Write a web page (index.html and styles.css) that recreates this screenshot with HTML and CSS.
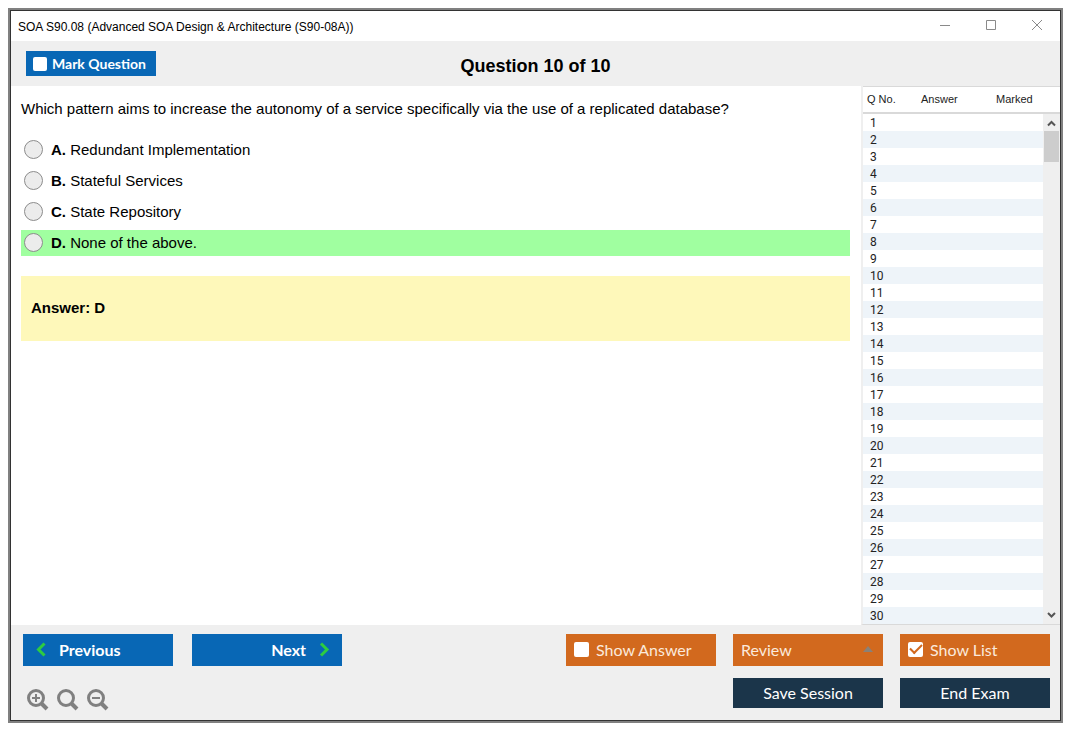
FILE: index.html
```html
<!DOCTYPE html>
<html lang="en">
  <head>
    <meta charset="UTF-8" />
    <meta name="viewport" content="width=device-width, initial-scale=1.0" />
    <title>SOA S90.08</title>
    <link rel="stylesheet" href="styles.css">
  </head>
  <body>
    <div class="window">
      <div class="title-bar">
        <span class="title">SOA S90.08 (Advanced SOA Design &amp; Architecture (S90-08A))</span>
        <div class="window-controls">
          <button type="button" aria-label="Minimize">
            <svg width="12" height="12" viewBox="0 0 12 12"><path d="M1 5.500h10" /></svg>
          </button>
          <button type="button" aria-label="Maximize">
            <svg width="12" height="12" viewBox="0 0 12 12"><path d="M1.500 .5h9v9h-9z" /></svg>
          </button>
          <button type="button" aria-label="Close">
            <svg width="12" height="12" viewBox="0 0 12 12"><path d="M1 0l10 10M11 0L1 10" /></svg>
          </button>
        </div>
      </div>

      <header class="header">
        <label class="mark">
          <input type="checkbox" class="check check-small" id="markQuestion" />
          Mark Question
        </label>
        <h1>Question 10 of 10</h1>
      </header>

      <main class="main">
        <section class="question">
          <p class="question-text">
            Which pattern aims to increase the autonomy of a service
            specifically via the use of a replicated database?
          </p>
          <div class="options">
            <label class="option">
              <input type="radio" name="answer" value="A" />
              <span><b>A.</b> Redundant Implementation</span>
            </label>
            <label class="option">
              <input type="radio" name="answer" value="B" />
              <span><b>B.</b> Stateful Services</span>
            </label>
            <label class="option">
              <input type="radio" name="answer" value="C" />
              <span><b>C.</b> State Repository</span>
            </label>
            <label class="option correct">
              <input type="radio" name="answer" value="D" />
              <span><b>D.</b> None of the above.</span>
            </label>
          </div>
          <div class="answer-box" id="answerBox">Answer: D</div>
        </section>

        <aside class="list" id="questionList">
          <table class="list-table">
            <thead>
              <tr>
                <th class="col-no">Q No.</th>
                <th class="col-answer">Answer</th>
                <th>Marked</th>
              </tr>
            </thead>
            <tbody id="listRows"></tbody>
          </table>
          <div class="scrollbar">
            <svg width="9" height="17" viewBox="0 0 9 17"><path d="M1 11.500L4.500 8L8 11.500" /></svg>
            <div class="thumb"></div>
            <svg width="9" height="17" viewBox="0 0 9 17"><path d="M1 6L4.500 9.500L8 6" /></svg>
          </div>
        </aside>
      </main>

      <footer class="footer">
        <div class="footer-row">
          <button type="button" class="btn btn-blue">
            <svg width="12" height="16" viewBox="0 0 12 16"><path d="M9.500 2.500L3.500 8.500l6 6" /></svg>
            Previous
          </button>
          <button type="button" class="btn btn-blue btn-next">
            Next
            <svg width="12" height="16" viewBox="0 0 12 16"><path d="M3 2.500l6 6l-6 6" /></svg>
          </button>
          <div class="right">
            <label class="btn btn-orange">
              <input type="checkbox" class="check" id="showAnswer" />
              Show Answer
            </label>
            <div class="btn btn-orange">
              <select class="review" aria-label="Review">
                <option>Review</option>
              </select>
              <svg class="arrow" width="12" height="6" viewBox="0 0 12 6"><path d="M0 6L5 0l5 6z" /></svg>
            </div>
            <label class="btn btn-orange">
              <input type="checkbox" class="check" id="showList" checked />
              Show List
            </label>
          </div>
        </div>

        <div class="footer-row">
          <div class="zoom">
            <button type="button" aria-label="Zoom in">
              <svg width="22" height="22" viewBox="0 0 22 22">
                <circle cx="9" cy="9" r="7.500" />
                <path d="M14.500 14.500L20 20" class="handle" />
                <path d="M5 9h8M9 5v8" class="sign" />
              </svg>
            </button>
            <button type="button" aria-label="Reset zoom">
              <svg width="22" height="22" viewBox="0 0 22 22">
                <circle cx="9" cy="9" r="7.500" />
                <path d="M14.500 14.500L20 20" class="handle" />
              </svg>
            </button>
            <button type="button" aria-label="Zoom out">
              <svg width="22" height="22" viewBox="0 0 22 22">
                <circle cx="9" cy="9" r="7.500" />
                <path d="M14.500 14.500L20 20" class="handle" />
                <path d="M5 9h8" class="sign" />
              </svg>
            </button>
          </div>
          <div class="right">
            <button type="button" class="btn btn-navy">Save Session</button>
            <button type="button" class="btn btn-navy">End Exam</button>
          </div>
        </div>
      </footer>
    </div>

    <script>
      const rows = document.getElementById("listRows");

      for (let i = 1; i <= 30; i++) {
        const row = document.createElement("tr");
        row.innerHTML = `<td>${i}</td><td></td><td></td>`;
        rows.appendChild(row);
      }

      // Toggle the question list
      document.getElementById("showList").addEventListener("change", (e) => {
        document.getElementById("questionList").hidden = !e.target.checked;
      });
    </script>
  </body>
</html>
```
FILE: styles.css
```css
* {
  box-sizing: border-box;
}

body {
  margin: 0;
  padding: 8px 12px 12px 8px;
  min-height: 100vh;
  display: flex;
  background-color: white;
  color: black;
  font-family: "Liberation Sans", Arial, sans-serif;
  font-size: 15px;
}

button {
  padding: 0;
  border: none;
  background: none;
  cursor: pointer;
}

svg {
  display: block;
  flex: none;
  fill: none;
}

.window {
  flex: 1;
  display: flex;
  flex-direction: column;
  border: 2px solid #808080;
  outline: 1px solid #333;
  outline-offset: -3px;
  padding: 1px;
}

.title-bar {
  display: flex;
  justify-content: space-between;
  height: 30px;
  padding-left: 7px;
}

.title {
  font-size: 12px;
  line-height: 32px;
}

.window-controls {
  display: flex;
}

.window-controls button {
  width: 46px;
  display: flex;
  align-items: center;
  justify-content: center;
}

.window-controls svg {
  stroke: #8a8a8a;
}

.header {
  display: grid;
  grid-template-columns: 1fr auto 1fr;
  align-items: center;
  height: 45px;
  padding: 0 15px;
  background-color: #efefef;
}

.header h1 {
  margin: 4px 0 0;
  font-size: 18px;
  line-height: 24px;
}

.mark {
  justify-self: start;
  display: flex;
  align-items: center;
  gap: 5px;
  width: 130px;
  height: 25px;
  padding-left: 7px;
  background-color: #0867b5;
  color: white;
  font-family: Lato, sans-serif;
  font-size: 14px;
  font-weight: bold;
}

.check {
  appearance: none;
  width: 15px;
  height: 15px;
  margin: 0;
  border-radius: 2px;
  background-color: white;
}

.check-small {
  width: 14px;
  height: 14px;
}

.check:checked {
  display: flex;
  align-items: center;
  justify-content: center;
}

.check:checked::before {
  content: "";
  width: 10px;
  height: 5px;
  margin-bottom: 3px;
  border-left: 2px solid #d2691e;
  border-bottom: 2px solid #d2691e;
  transform: rotate(-45deg);
}

.main {
  flex: 1;
  display: flex;
}

.question {
  flex: 1;
  padding: 13px 11px 0 10px;
}

.question-text {
  margin: 0 0 18px;
  line-height: 20px;
}

.options {
  display: flex;
  flex-direction: column;
  gap: 5px;
}

.option {
  display: flex;
  align-items: center;
  gap: 8px;
  height: 26px;
  padding: 0 0 2px 3px;
}

.option input {
  appearance: none;
  width: 19px;
  height: 19px;
  margin: 0;
  border: 1px solid #8c8c8c;
  border-radius: 50%;
  background-color: #ececec;
}

.option input:checked {
  background-color: #0867b5;
}

.correct {
  background-color: #a0ffa0;
}

.answer-box {
  margin-top: 20px;
  padding: 0 10px 2px;
  background-color: #fef8ba;
  font-weight: bold;
  line-height: 63px;
}

.list {
  display: flex;
  align-items: flex-end;
  width: 199px;
  border-left: 2px solid #efefef;
  border-bottom: 1px solid #d9d9d9;
  background: linear-gradient(#d9d9d9 1px, white 1px, white 26px, #d9d9d9 26px, #d9d9d9 28px, white 28px);
}

.list[hidden] {
  display: none;
}

.list-table {
  flex: 1;
  table-layout: fixed;
  border-collapse: collapse;
  color: #222;
  font-size: 11px;
}

.list-table th {
  height: 28px;
  padding: 0 0 2px 4px;
  font-weight: normal;
  text-align: left;
  white-space: nowrap;
}

.list-table td {
  height: 17px;
  padding: 2px 0 0 7px;
  font-family: Roboto, sans-serif;
  font-size: 12px;
  line-height: 15px;
}

.list-table tbody tr:nth-child(even) {
  background-color: #eef4f9;
}

.list-table .col-no {
  width: 54px;
}

.list-table .col-answer {
  width: 75px;
}

.scrollbar {
  display: flex;
  flex-direction: column;
  align-items: center;
  width: 17px;
  height: 510px;
  background-color: #efefef;
}

.scrollbar svg {
  stroke: #555;
  stroke-width: 2;
}

.thumb {
  width: 15px;
  height: 31px;
  margin-bottom: auto;
  background-color: #cdcdcd;
}

.footer {
  display: flex;
  flex-direction: column;
  gap: 12px;
  height: 95px;
  padding: 9px 10px 0 12px;
  background-color: #efefef;
}

.footer-row {
  display: flex;
  gap: 19px;
}

.right {
  display: flex;
  gap: 17px;
  margin-left: auto;
}

.btn {
  display: flex;
  align-items: center;
  gap: 7px;
  width: 150px;
  height: 32px;
  padding: 0 8px 2px;
  font-family: Lato, sans-serif;
  font-size: 16px;
  color: white;
}

.btn-blue {
  gap: 12px;
  padding: 0 12px 2px;
  background-color: #0867b5;
  font-weight: bold;
}

.btn-blue svg {
  stroke: #2ecc40;
  stroke-width: 3;
}

.btn-next {
  justify-content: flex-end;
}

.btn-orange {
  background-color: #d2691e;
  color: #fbe9dc;
}

.review {
  flex: 1;
  appearance: none;
  padding: 0;
  border: none;
  background: none;
  color: inherit;
  font: inherit;
}

.arrow {
  fill: #8a8178;
}

.btn-navy {
  justify-content: center;
  height: 30px;
  background-color: #1b354a;
}

.zoom {
  display: flex;
  gap: 8px;
  padding: 11px 0 0 4px;
}

.zoom button {
  width: 22px;
  height: 22px;
}

.zoom svg {
  stroke: #808080;
  stroke-width: 3;
}

.zoom .handle {
  stroke-width: 4;
}

.zoom .sign {
  stroke-width: 2;
}
```
